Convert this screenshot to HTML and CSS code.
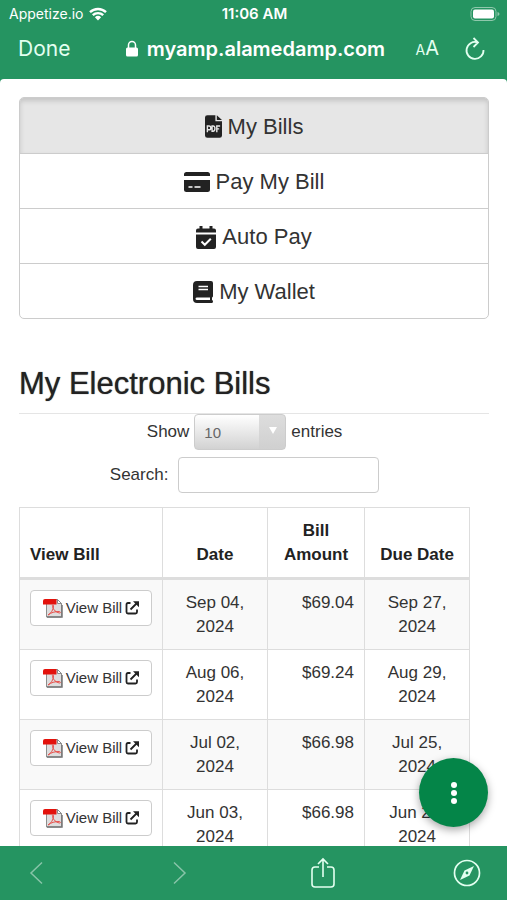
FILE: index.html
```html
<!DOCTYPE html>
<html lang="en">
<head>
<meta charset="utf-8">
<meta name="viewport" content="width=device-width, initial-scale=1">
<title>My Electronic Bills</title>
<link rel="stylesheet" href="styles.css">
</head>
<body>
<!-- shared icons -->
<svg class="sprite" aria-hidden="true">
	<symbol id="pdf" viewBox="0 0 20 20">
		<path d="M3.500 1.500h11l4 4v13.500h-15z" fill="#dedede" stroke="#8c8c8c"/>
		<path d="M14.500 1.500v4h4z" fill="#fff" stroke="#8c8c8c"/>
		<path d="M4 19h15V7" fill="none" stroke="#777" stroke-width="1.500"/>
		<path d="M0 3q0-2 2-2h11.500v5.500H0z" fill="#e3120b"/>
		<path d="M5 17c3-1.500 5.500-5.500 5.500-9 0-1.500-1.500-1.500-1 .5.800 3.500 3.500 6 7 6.500 1.500 0 1-1.500-.5-1.500-4 0-8 1-11 3.500z" fill="none" stroke="#e8504b"/>
	</symbol>
	<symbol id="external" viewBox="0 0 14 14">
		<path d="M5.500 2H3q-1.500 0-1.500 1.500v7.500q0 1.500 1.500 1.500h7.500q1.500 0 1.500-1.500V8.500M5.500 8.500l6.500-6.500" fill="none" stroke="#222" stroke-width="1.800"/>
		<path d="M8 .2h6v6z" fill="#222"/>
	</symbol>
</svg>

<header class="browser-top">
	<div class="status">
		<div class="carrier">Appetize.io
			<svg width="18" height="14" viewBox="0 0 18 14"><path d="M1 5.200a11.500 11.500 0 0 1 16 0M3.800 8.200a7.500 7.500 0 0 1 10.400 0" fill="none" stroke="#fff" stroke-width="2.400"/><path d="M5.900 10.300a4.500 4.500 0 0 1 6.200 0L9 13.500z" fill="#fff"/></svg>
		</div>
		<div class="time">11:06 AM</div>
		<div class="battery">
			<svg width="30" height="14" viewBox="0 0 30 14"><rect x="1" y=".5" width="25" height="13" rx="4" fill="none" stroke="#8fc8ac"/><rect x="3" y="2.500" width="21" height="9" rx="2" fill="#fff"/><path d="M27.500 5v4q2-.5 2-2t-2-2z" fill="#8fc8ac"/></svg>
		</div>
	</div>
	<div class="address">
		<button class="done">Done</button>
		<div class="url">
			<svg width="12" height="17" viewBox="0 0 12 17"><rect y="7.500" width="12" height="9" rx="1.500" fill="#fff"/><path d="M2.500 8V5a3.500 3.500 0 0 1 7 0v3" fill="none" stroke="#fff" stroke-width="1.500"/></svg>
			myamp.alamedamp.com
		</div>
		<button class="text-size" aria-label="Text size"><small>A</small>A</button>
		<button class="reload" aria-label="Reload">
			<svg width="20" height="24" viewBox="0 0 20 24"><path d="M12.500 5.300A8.500 8.500 0 1 0 18.500 13M8.500 1l4.500 4.500-4.500 4.500" fill="none" stroke="#e3fff0" stroke-width="1.800"/></svg>
		</button>
	</div>
</header>

<main class="page">
	<nav class="menu">
		<a href="#" class="active">
			<svg width="17" height="23" viewBox="0 0 18 24"><path d="M2.500 0H11v6.500h7v15q0 2.500-2.500 2.500h-13Q0 24 0 21.500v-19Q0 0 2.500 0zM12.500 0 18 5h-5.500z" fill="#222"/><path d="M2.500 18v-6.500h1.700a1.500 1.500 0 0 1 0 4H2.500M7.500 11.500v5.500h1q2 0 2-2.800t-2-2.700zM12.500 18v-6.500h3.500M12.500 14.500H15" fill="none" stroke="#e6e6e6" stroke-width="1.500"/></svg>
			My Bills
		</a>
		<a href="#">
			<svg width="26" height="20" viewBox="0 0 26 20"><path d="M2.500 0h21Q26 0 26 2.500V4H0V2.500Q0 0 2.500 0zM0 8h26v9.500q0 2.500-2.500 2.500h-21Q0 20 0 17.500z" fill="#222"/><path d="M4.500 15h4M10.500 15h6" stroke="#fff" stroke-width="1.500"/></svg>
			Pay My Bill
		</a>
		<a href="#">
			<svg width="20" height="23" viewBox="0 0 20 23"><path d="M3.500 0h3v2.500h7V0h3v2.500H18q2 0 2 2V6.500H0V4.500q0-2 2-2h1.500zM0 8.500h20V21q0 2-2 2H2q-2 0-2-2z" fill="#222"/><path d="m5.500 15.500 3.300 3.300 6-6" fill="none" stroke="#fff" stroke-width="2"/></svg>
			Auto Pay
		</a>
		<a href="#">
			<svg width="20" height="22" viewBox="0 0 20 22"><path d="M4 0h14q2 0 2 2v13q0 1-1 1.500V19q1 .2 1 1.500T19 22H4q-4 0-4-4V4q0-4 4-4z" fill="#222"/><path d="M4 16.500h13V19H4q-1.500 0-1.500-1.200T4 16.500z" fill="#fff"/><path d="M5.500 5.500h9.500M5.500 8.500h9.500" stroke="#fff" stroke-width="1.300"/></svg>
			My Wallet
		</a>
	</nav>

	<h1>My Electronic Bills</h1>

	<div class="bills">
		<div class="field length">
			<label for="entries">Show</label>
			<span class="select">
				<select id="entries">
					<option>10</option>
					<option>25</option>
					<option>50</option>
				</select>
			</span>
			<span>entries</span>
		</div>
		<div class="field filter">
			<label for="search">Search:</label>
			<input type="search" id="search">
		</div>

		<table>
			<thead>
				<tr>
					<th class="view">View Bill</th>
					<th class="date">Date</th>
					<th class="amount">Bill Amount</th>
					<th class="due">Due Date</th>
				</tr>
			</thead>
			<tbody>
				<tr>
					<td><a href="#" class="btn"><svg width="20" height="20"><use href="#pdf"/></svg>View Bill<svg width="14" height="14"><use href="#external"/></svg></a></td>
					<td>Sep 04,<br>2024</td>
					<td class="money">$69.04</td>
					<td>Sep 27,<br>2024</td>
				</tr>
				<tr>
					<td><a href="#" class="btn"><svg width="20" height="20"><use href="#pdf"/></svg>View Bill<svg width="14" height="14"><use href="#external"/></svg></a></td>
					<td>Aug 06,<br>2024</td>
					<td class="money">$69.24</td>
					<td>Aug 29,<br>2024</td>
				</tr>
				<tr>
					<td><a href="#" class="btn"><svg width="20" height="20"><use href="#pdf"/></svg>View Bill<svg width="14" height="14"><use href="#external"/></svg></a></td>
					<td>Jul 02,<br>2024</td>
					<td class="money">$66.98</td>
					<td>Jul 25,<br>2024</td>
				</tr>
				<tr>
					<td><a href="#" class="btn"><svg width="20" height="20"><use href="#pdf"/></svg>View Bill<svg width="14" height="14"><use href="#external"/></svg></a></td>
					<td>Jun 03,<br>2024</td>
					<td class="money">$66.98</td>
					<td>Jun 26,<br>2024</td>
				</tr>
			</tbody>
		</table>
	</div>
</main>

<button class="more" aria-label="More">
	<svg width="6" height="24" viewBox="0 0 6 24"><g fill="#fff"><circle cx="3" cy="4" r="3"/><circle cx="3" cy="12" r="3"/><circle cx="3" cy="20" r="3"/></g></svg>
</button>

<footer class="browser-bottom">
	<button class="dim" aria-label="Back">
		<svg width="14" height="24" viewBox="0 0 14 24"><path d="M13 1.500 2 12l11 10.500" fill="none" stroke="#fff" stroke-width="1.500"/></svg>
	</button>
	<button class="dim" aria-label="Forward">
		<svg width="14" height="24" viewBox="0 0 14 24"><path d="m1 1.500 11 10.500L1 22.500" fill="none" stroke="#fff" stroke-width="1.500"/></svg>
	</button>
	<button aria-label="Share">
		<svg width="24" height="32" viewBox="0 0 24 32"><path d="M8 10H4q-3 0-3 3v14q0 3 3 3h16q3 0 3-3V13q0-3-3-3h-4M12 20V2M7 7l5-5 5 5" fill="none" stroke="#e3fff0" stroke-width="1.600"/></svg>
	</button>
	<button aria-label="Open in Safari">
		<svg width="28" height="28" viewBox="0 0 28 28"><circle cx="14" cy="14" r="12.500" fill="none" stroke="#e3fff0" stroke-width="1.700"/><path d="m21 7-4.500 9.500L7 21l4.500-9.500z" fill="#e3fff0"/><circle cx="14" cy="14" r="1.400" fill="#259461"/></svg>
	</button>
</footer>
</body>
</html>
```
FILE: styles.css
```css
* {
	box-sizing: border-box;
	margin: 0;
	padding: 0;
}
body {
	display: flex;
	flex-direction: column;
	height: 100vh;
	overflow: hidden;
	background: #259461;
	color: #333;
	font: 17px/24px "Liberation Sans", Arial, sans-serif;
}
a {
	color: inherit;
	text-decoration: none;
}
svg {
	display: block;
	flex: none;
}
.sprite {
	position: absolute;
	width: 0;
	height: 0;
}

/* browser bars */
.browser-top,
.browser-bottom {
	flex: none;
	background: #259461;
	color: #fff;
	font-family: Inter, sans-serif;
}
.browser-top button,
.browser-bottom button {
	border: 0;
	background: none;
	color: #e3fff0;
	font: inherit;
}
.status {
	display: grid;
	grid-template-columns: 1fr auto 1fr;
	align-items: center;
	height: 28px;
	padding: 0 7px 0 9px;
	font-size: 14px;
}
.carrier {
	display: flex;
	align-items: center;
	gap: 6px;
}
.time {
	font-size: 15px;
	font-weight: 600;
}
.battery {
	justify-self: end;
}
.address {
	display: flex;
	align-items: center;
	height: 51px;
	padding: 0 22px 10px 18px;
}
.address .done {
	font-size: 21px;
}
.url {
	display: flex;
	flex: 1;
	align-items: center;
	justify-content: center;
	gap: 9px;
	padding-left: 25px;
	font-size: 20px;
	font-weight: 600;
}
.address .text-size {
	margin-right: 26px;
	font-size: 20px;
}
.text-size small {
	font-size: 14px;
}
.browser-bottom {
	display: flex;
	align-items: center;
	justify-content: space-between;
	height: 54px;
	padding: 0 26px 0 22px;
}
.browser-bottom button {
	display: flex;
	justify-content: center;
	width: 28px;
}
.browser-bottom .dim {
	opacity: .45;
}

/* page */
.page {
	flex: 1;
	min-height: 0;
	overflow: hidden;
	padding: 18px 18px 0 19px;
	border-radius: 4px 4px 0 0;
	background: #fff;
}
.menu {
	overflow: hidden;
	border: 1px solid #ccc;
	border-radius: 5px;
	font-size: 22px;
}
.menu a {
	display: flex;
	align-items: center;
	justify-content: center;
	gap: 6px;
	height: 55px;
	padding-top: 2px;
	border-top: 1px solid #ccc;
}
.menu a.active {
	border-top: 0;
	background: #e6e6e6;
	box-shadow: inset 0 3px 5px rgba(0,0,0,.15);
}
h1 {
	margin-top: 45px;
	padding-bottom: 9px;
	border-bottom: 1px solid #e5e5e5;
	color: #222;
	font-size: 31px;
	font-weight: 500;
	line-height: 40px;
	text-shadow: 0 0 1px #555;
}
.bills {
	width: 96%;
}
.field {
	display: flex;
	align-items: center;
	justify-content: center;
	height: 36px;
}
.length {
	gap: 5px;
}
.filter {
	gap: 10px;
	margin: 7px 0 14px;
}
.select {
	position: relative;
}
.select::after {
	content: "";
	position: absolute;
	top: 13px;
	right: 9px;
	border: 4px solid transparent;
	border-top: 7px solid #fff;
	border-bottom: 0;
	pointer-events: none;
}
.select select {
	display: block;
	appearance: none;
	width: 92px;
	height: 36px;
	padding-left: 9px;
	border: 1px solid #ccc;
	border-radius: 4px;
	background: linear-gradient(#ddd, #d0d0d0) right / 26px 100% no-repeat, linear-gradient(#fff, #d2d2d2);
	color: #666;
	font: 15px "Liberation Sans", Arial, sans-serif;
}
.filter input {
	width: 201px;
	height: 36px;
	padding: 0 8px;
	border: 1px solid #ccc;
	border-radius: 4px;
	font: inherit;
}

table {
	width: 100%;
	border-collapse: collapse;
	table-layout: fixed;
}
th,
td {
	padding: 11px 10px 10px;
	border: 1px solid #ddd;
	text-align: center;
	vertical-align: top;
}
th {
	border-bottom: 3px solid #ddd;
	color: #222;
	vertical-align: bottom;
}
th.view {
	width: 143px;
	text-align: left;
}
th.date {
	width: 105px;
}
th.amount {
	width: 97px;
}
tbody tr:nth-child(odd) {
	background: #f9f9f9;
}
td:first-child {
	padding-top: 10px;
}
td.money {
	text-align: right;
}
.btn {
	display: flex;
	align-items: center;
	justify-content: center;
	gap: 3px;
	height: 36px;
	border: 1px solid #ccc;
	border-radius: 4px;
	background: #fff;
	font-size: 15px;
}

.more {
	position: fixed;
	right: 19px;
	bottom: 73px;
	display: flex;
	align-items: center;
	justify-content: center;
	width: 69px;
	height: 69px;
	border: 0;
	border-radius: 50%;
	background: #048548;
	box-shadow: 0 3px 8px rgba(0,0,0,.35);
}
```
